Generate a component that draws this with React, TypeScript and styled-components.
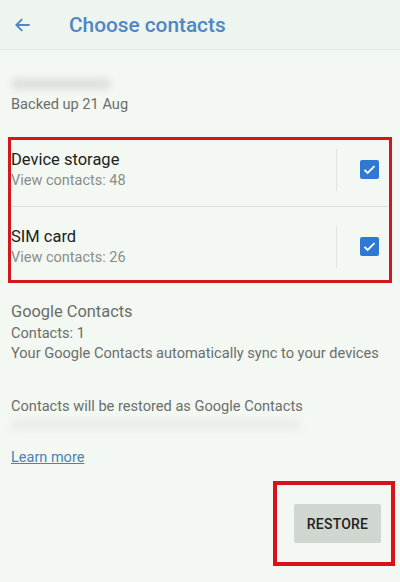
import styled, { createGlobalStyle } from "styled-components";

const GlobalStyle = createGlobalStyle`
    html, body {
        margin: 0;
        padding: 0;
        background-color: #f3f8f3;
    }
    * {
        box-sizing: border-box;
    }
`;

const Screen = styled.div`
    width: 400px;
    height: 582px;
    background-color: #f3f8f3;
    font-family: Roboto, "Liberation Sans", sans-serif;
    display: flex;
    flex-direction: column;
    overflow: hidden;
`;

const Header = styled.header`
    height: 50px;
    flex-shrink: 0;
    display: flex;
    align-items: center;
    padding-left: 13px;
    gap: 36px;
    background-color: #eef4ee;
    border-bottom: 1px solid #e2e8e2;
`;

const Title = styled.h1`
    margin: 0;
    font-size: 20.8px;
    font-weight: 500;
    color: #4e86c6;
`;

const Content = styled.div`
    display: flex;
    flex-direction: column;
    padding: 0 8px;
`;

const Account = styled.div`
    padding: 28px 3px 0;
    display: flex;
    flex-direction: column;
    gap: 4px;
`;

const Blur = styled.div<{ w: number; tone: string }>`
    width: ${(p) => p.w}px;
    height: 12px;
    border-radius: 6px;
    background-color: ${(p) => p.tone};
    filter: blur(3px);
`;

const SmallText = styled.div`
    font-size: 14.6px;
    line-height: 20px;
    color: #6b6e6b;
`;

const Frame = styled.div`
    margin-top: 23px;
    border: 3px solid #d4161e;
    display: flex;
    flex-direction: column;
`;

const Row = styled.div<{ last?: boolean }>`
    height: ${(p) => (p.last ? 73 : 67)}px;
    display: flex;
    align-items: center;
    border-bottom: ${(p) => (p.last ? "none" : "1px solid #dde2dd")};
    padding: ${(p) => (p.last ? "6px 0 0" : "0 0 7px")};
`;

const RowText = styled.div`
    flex: 1;
    display: flex;
    flex-direction: column;
    gap: 1px;
`;

const RowTitle = styled.div`
    font-size: 16.5px;
    line-height: 21px;
    color: #202220;
`;

const RowSub = styled.div`
    font-size: 14.5px;
    line-height: 20px;
    color: #8a8d8a;
`;

const VDivider = styled.div`
    width: 1px;
    height: 42px;
    background-color: #dfe3df;
`;

const CheckBox = styled.div`
    width: 19px;
    height: 19px;
    margin: 0 10px 0 23px;
    border-radius: 2px;
    background-color: #2f79d4;
    display: flex;
    align-items: center;
    justify-content: center;
`;

const Section = styled.div`
    padding: 18px 3px 0;
    display: flex;
    flex-direction: column;
`;

const SectionTitle = styled.div`
    font-size: 16.4px;
    line-height: 22px;
    color: #6a6d6a;
`;

const Notice = styled.div`
    padding: 33px 3px 0;
    display: flex;
    flex-direction: column;
    gap: 3px;
`;

const LearnMore = styled.a`
    margin: 17px 3px 0;
    font-size: 14.5px;
    line-height: 20px;
    color: #4a80bb;
    text-decoration: underline;
`;

const Footer = styled.div`
    display: flex;
    justify-content: flex-end;
    padding-top: 13px;
    margin-right: -3px;
`;

const RestoreFrame = styled.div`
    width: 122px;
    height: 85px;
    border: 4px solid #d8121a;
    display: flex;
    align-items: center;
    justify-content: center;
    padding-left: 7px;
`;

const RestoreButton = styled.button`
    width: 87px;
    height: 39px;
    border: none;
    border-radius: 2px;
    background-color: #d0d6d0;
    font-family: Roboto, "Liberation Sans", sans-serif;
    font-size: 14px;
    font-weight: 500;
    color: #222;
    letter-spacing: 0.2px;
`;

function Check() {
    return (
        <CheckBox>
            <svg width="15" height="15" viewBox="0 0 24 24">
                <path d="M4 12.5l5 5L20 6.5" fill="none" stroke="#fff" strokeWidth="3" />
            </svg>
        </CheckBox>
    );
}

export default function App() {
    return (
        <Screen>
            <GlobalStyle />
            <Header>
                <svg width="20" height="20" viewBox="0 0 24 24">
                    <path d="M20 12H5M11 5l-7 7 7 7" fill="none" stroke="#4e86c6" strokeWidth="2.2" />
                </svg>
                <Title>Choose contacts</Title>
            </Header>
            <Content>
                <Account>
                    <Blur w={100} tone="#dde2dd" />
                    <SmallText>Backed up 21 Aug</SmallText>
                </Account>
                <Frame>
                    <Row>
                        <RowText>
                            <RowTitle>Device storage</RowTitle>
                            <RowSub>View contacts: 48</RowSub>
                        </RowText>
                        <VDivider />
                        <Check />
                    </Row>
                    <Row last>
                        <RowText>
                            <RowTitle>SIM card</RowTitle>
                            <RowSub>View contacts: 26</RowSub>
                        </RowText>
                        <VDivider />
                        <Check />
                    </Row>
                </Frame>
                <Section>
                    <SectionTitle>Google Contacts</SectionTitle>
                    <SmallText>Contacts: 1</SmallText>
                    <SmallText>Your Google Contacts automatically sync to your devices</SmallText>
                </Section>
                <Notice>
                    <SmallText>Contacts will be restored as Google Contacts</SmallText>
                    <Blur w={290} tone="#e9eee9" />
                </Notice>
                <LearnMore href="#">Learn more</LearnMore>
                <Footer>
                    <RestoreFrame>
                        <RestoreButton>RESTORE</RestoreButton>
                    </RestoreFrame>
                </Footer>
            </Content>
        </Screen>
    );
}
